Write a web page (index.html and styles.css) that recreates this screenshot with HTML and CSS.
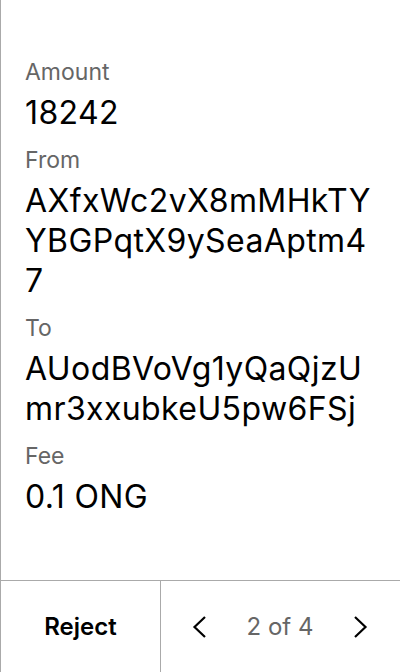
FILE: index.html
```html
<!DOCTYPE html>
<html>
<head>
<meta charset="utf-8">
<link rel="stylesheet" href="styles.css">
</head>
<body>
<div class="screen">
  <div class="content">
    <div class="field">
      <div class="label">Amount</div>
      <div class="value">18242</div>
    </div>
    <div class="field">
      <div class="label">From</div>
      <div class="value">AXfxWc2vX8mMHkTYYBGPqtX9ySeaAptm47</div>
    </div>
    <div class="field">
      <div class="label">To</div>
      <div class="value">AUodBVoVg1yQaQjzUmr3xxubkeU5pw6FSj</div>
    </div>
    <div class="field">
      <div class="label">Fee</div>
      <div class="value">0.1 ONG</div>
    </div>
  </div>
  <div class="footer">
    <div class="reject">Reject</div>
    <div class="pager">
      <svg class="chev" width="15" height="22" viewBox="0 0 15 22"><path d="M13 1 L2.5 11 L13 21" fill="none" stroke="#000" stroke-width="2.2"/></svg>
      <span class="count">2 of 4</span>
      <svg class="chev" width="15" height="22" viewBox="0 0 15 22"><path d="M2 1 L12.5 11 L2 21" fill="none" stroke="#000" stroke-width="2.2"/></svg>
    </div>
  </div>
</div>
</body>
</html>
```
FILE: styles.css
```css
html, body { margin: 0; padding: 0; background: #fff; }
body { font-family: Inter, "Noto Sans", sans-serif; }
.screen {
  width: 400px; height: 672px; box-sizing: border-box;
  border-left: 1px solid #aaa;
  display: flex; flex-direction: column;
}
.content { flex: 1; padding: 57px 24px 0 24px; display: flex; flex-direction: column; }
.field { display: flex; flex-direction: column; margin-bottom: 12px; }
.label { font-size: 23px; line-height: 30px; color: #666; margin-bottom: 6px; }
.value { font-size: 32px; line-height: 40px; color: #000; word-break: break-all; letter-spacing: 0.4px; }
.footer { height: 92px; border-top: 1px solid #aaa; display: flex; box-sizing: border-box; }
.reject { width: 159px; border-right: 1px solid #aaa; display: flex; align-items: center; justify-content: center; font-size: 24px; font-weight: 600; color: #000; }
.pager { flex: 1; display: flex; align-items: center; justify-content: space-between; padding: 0 32px 0 31px; }
.count { font-size: 24px; color: #666; }
```
